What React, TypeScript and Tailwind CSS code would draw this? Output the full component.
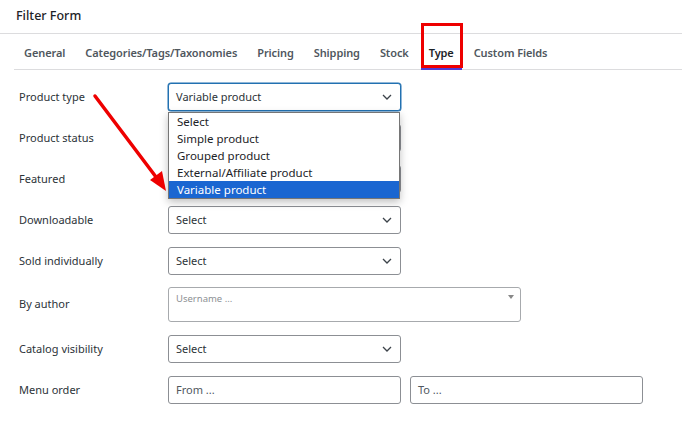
import React from 'react';

const tabs = ['General', 'Categories/Tags/Taxonomies', 'Pricing', 'Shipping', 'Stock', 'Type', 'Custom Fields'];

const options = ['Select', 'Simple product', 'Grouped product', 'External/Affiliate product', 'Variable product'];

const Chevron = () => (
  <svg width="10" height="6" viewBox="0 0 10 6" className="shrink-0">
    <path d="M1 1l4 4 4-4" fill="none" stroke="#3c434a" strokeWidth="1.3" />
  </svg>
);

const SelectBox = ({ value, focused = false }: { value: string; focused?: boolean }) => (
  <div
    className={`w-[233px] h-[28px] rounded-[3px] border flex items-center justify-between pl-[7px] pr-[8px] bg-white ${
      focused ? 'border-[#2271b1] shadow-[0_0_0_0.5px_#2271b1]' : 'border-[#8c8f94]'
    }`}
  >
    <span className="text-[11px] text-[#2c3338]">{value}</span>
    <Chevron />
  </div>
);

const Row = ({ label, children }: { label: string; children: React.ReactNode }) => (
  <div className="flex items-center">
    <div className="w-[149px] shrink-0 text-[11px] text-[#2c3338]">{label}</div>
    {children}
  </div>
);

export default function App() {
  return (
    <div className="relative w-[682px] h-[440px] bg-white overflow-hidden" style={{ fontFamily: '"Noto Sans", "Open Sans", sans-serif' }}>
      <div className="h-[34px] border-b border-[#dcdcde] flex items-center pl-[16px]">
        <h1 className="text-[12.5px] font-medium text-[#1d2327]">Filter Form</h1>
      </div>

      <div className="ml-[14px] border-b border-[#dcdcde] h-[36px] flex items-stretch pl-[2px]">
        {tabs.map((t) => (
          <div
            key={t}
            className={`px-[8px] mr-[4px] pt-[4px] flex items-center text-[11px] font-semibold tracking-[-0.1px] ${
              t === 'Type' ? 'text-[#1d2327] border-b-2 border-[#4f3ed6] -mb-px' : 'text-[#50575e]'
            }`}
          >
            {t}
          </div>
        ))}
      </div>

      <div className="pl-[19px] pt-[13px] flex flex-col gap-[13px]">
        <Row label="Product type">
          <SelectBox value="Variable product" focused />
        </Row>
        <Row label="Product status">
          <SelectBox value="" />
        </Row>
        <Row label="Featured">
          <SelectBox value="" />
        </Row>
        <Row label="Downloadable">
          <SelectBox value="Select" />
        </Row>
        <Row label="Sold individually">
          <SelectBox value="Select" />
        </Row>
        <div className="-mt-px">
          <Row label="By author">
            <div className="w-[353px] h-[35px] rounded-[3px] border border-[#a7aaad] relative pl-[7px] pt-[5px] text-[9.5px] leading-[12px]">
              <span className="text-[#8c8f94]">Username ...</span>
              <span className="absolute right-[6px] top-[7px] w-0 h-0 border-l-[3px] border-r-[3px] border-t-[4px] border-l-transparent border-r-transparent border-t-[#888]" />
            </div>
          </Row>
        </div>
        <Row label="Catalog visibility">
          <SelectBox value="Select" />
        </Row>
        <Row label="Menu order">
          <div className="flex gap-[9px]">
            <div className="w-[233px] h-[28px] rounded-[3px] border border-[#8c8f94] flex items-center pl-[7px] text-[11px] text-[#50575e]">From ...</div>
            <div className="w-[233px] h-[28px] rounded-[3px] border border-[#8c8f94] flex items-center pl-[7px] text-[11px] text-[#50575e]">To ...</div>
          </div>
        </Row>
      </div>

      {/* open dropdown list */}
      <div className="absolute left-[168px] top-[112px] w-[232px] border border-[#767676] bg-white shadow-[0_3px_8px_rgba(0,0,0,0.25)] flex flex-col">
        {options.map((o, i) => (
          <div
            key={o}
            className={`h-[17px] leading-[17px] pl-[8px] text-[11.5px] ${
              i === options.length - 1 ? 'bg-[#1a66d1] text-white' : 'text-[#1d2327]'
            }`}
          >
            {o}
          </div>
        ))}
      </div>

      {/* annotation box */}
      <div className="absolute left-[421px] top-[23px] w-[42px] h-[45px] border-[3px] border-[#ee0000]" />

      {/* annotation arrow */}
      <svg className="absolute left-0 top-0 pointer-events-none" width="682" height="440">
        <line x1="95" y1="96" x2="156" y2="177" stroke="#ee0000" strokeWidth="3.5" strokeLinecap="round" />
        <polygon points="166,191 150,180 162,171" fill="#ee0000" />
      </svg>
    </div>
  );
}
